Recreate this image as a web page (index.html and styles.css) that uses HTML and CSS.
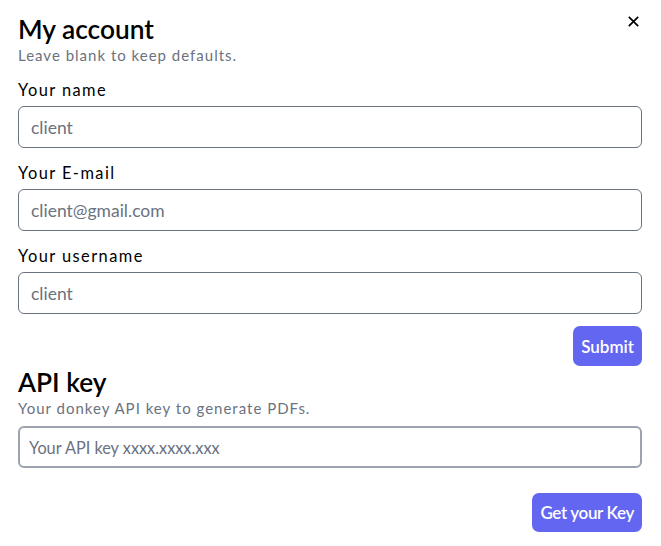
FILE: index.html
```html
<!DOCTYPE html>
<html lang="en">
<head>
<meta charset="utf-8">
<title>My account</title>
<link rel="stylesheet" href="styles.css">
</head>
<body>
<div class="modal">
  <button class="close" aria-label="Close">
    <svg width="11" height="11" viewBox="0 0 11 11"><path d="M0.8 0.8L10.2 10.2M10.2 0.8L0.8 10.2" stroke="#000" stroke-width="1.7"/></svg>
  </button>
  <section class="section">
    <h2 class="title">My account</h2>
    <p class="subtitle">Leave blank to keep defaults.</p>
    <form class="form">
      <label class="field">
        <span class="label">Your name</span>
        <input class="input" type="text" placeholder="client">
      </label>
      <label class="field">
        <span class="label">Your E-mail</span>
        <input class="input" type="email" placeholder="client@gmail.com">
      </label>
      <label class="field">
        <span class="label">Your username</span>
        <input class="input" type="text" placeholder="client">
      </label>
      <div class="actions">
        <button type="button" class="btn">Submit</button>
      </div>
    </form>
  </section>
  <section class="section">
    <h2 class="title">API key</h2>
    <p class="subtitle">Your donkey API key to generate PDFs.</p>
    <input class="input input-api" type="text" placeholder="Your API key xxxx.xxxx.xxx">
    <div class="actions actions-api">
      <button type="button" class="btn btn-key">Get your Key</button>
    </div>
  </section>
</div>
</body>
</html>
```

FILE: styles.css
```css
* { box-sizing: border-box; }
html, body { margin: 0; padding: 0; background: #fff; }
body {
  font-family: "Lato", "Liberation Sans", sans-serif;
  color: #000;
}
.modal {
  position: relative;
  padding: 13px 19px 0 18px;
}
.close {
  position: absolute;
  top: 16px;
  right: 22px;
  border: 0;
  background: none;
  padding: 0;
  width: 11px;
  height: 11px;
  display: flex;
}
.section { display: flex; flex-direction: column; }
.title {
  margin: 0;
  font-size: 26.3px;
  line-height: 32px;
  font-weight: 600;
}
.subtitle {
  margin: 0;
  font-size: 15px;
  line-height: 20px;
  color: #6b7280;
  letter-spacing: 1px;
}
.form { display: flex; flex-direction: column; margin-top: 15px; }
.field { display: flex; flex-direction: column; }
.field + .field { margin-top: 15px; }
.label {
  font-size: 16.4px;
  line-height: 20px;
  letter-spacing: 1.45px;
  margin-bottom: 6px;
}
.input {
  height: 42px;
  width: 100%;
  border: 1px solid #6b7280;
  border-radius: 6px;
  padding: 0 12px;
  font-family: inherit;
  font-size: 17.5px;
  background: #fff;
}
.input::placeholder { color: #6b7280; }
.actions { display: flex; justify-content: flex-end; margin-top: 12px; }
.btn {
  background: #6366f1;
  color: #fff;
  border: 0;
  border-radius: 7px;
  height: 40px;
  padding: 0 8px;
  font-family: inherit;
  font-size: 17px;
  font-weight: 600;
}
.btn-key { letter-spacing: -0.35px; height: 39px; }
.input-api {
  margin-top: 8px;
  border: 2px solid #9ca3af;
  padding: 0 9px;
  font-size: 16.3px;
}
.actions-api { margin-top: 25px; }
```
